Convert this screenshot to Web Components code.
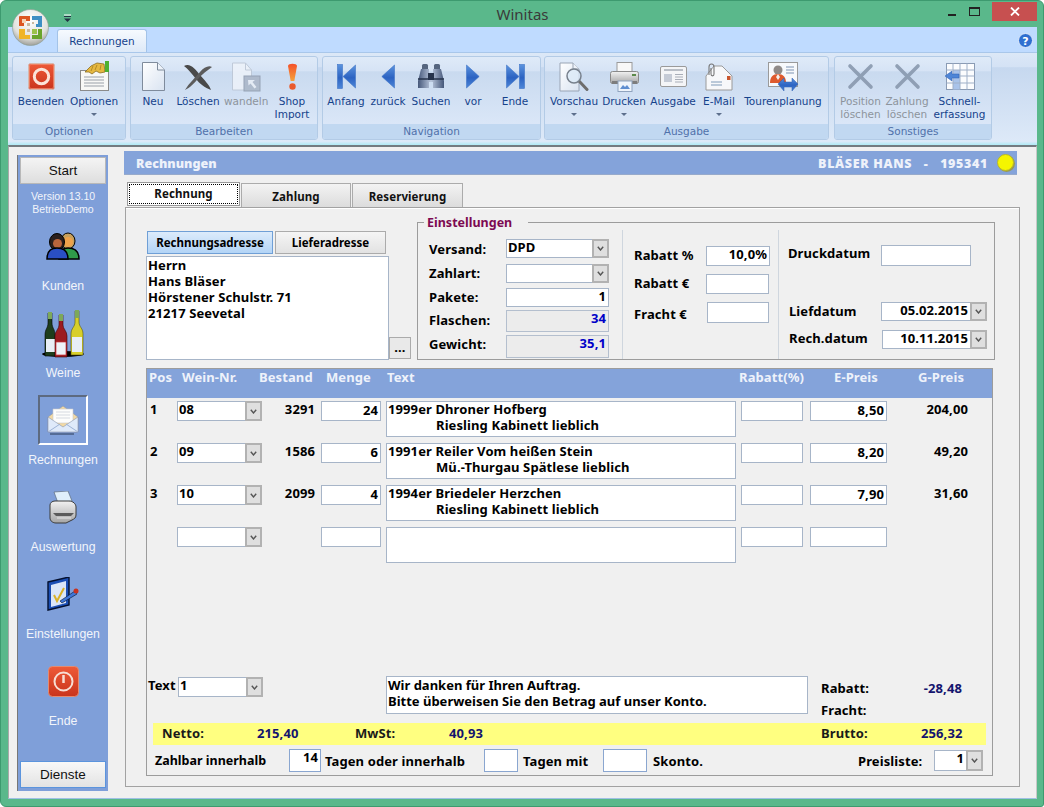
<!DOCTYPE html>
<html lang="de"><head><meta charset="utf-8"><title>Winitas</title>
<style>html,body{margin:0;padding:0;background:#fff}</style></head>
<body>
<svg width="0" height="0" style="position:absolute"><defs>
<linearGradient id="page" x1="0" y1="0" x2="1" y2="1"><stop offset="0" stop-color="#fff"/><stop offset="1" stop-color="#d9e3f1"/></linearGradient>
<linearGradient id="navb" x1="0" y1="0" x2="0" y2="1"><stop offset="0" stop-color="#5b93de"/><stop offset=".55" stop-color="#2c63c2"/><stop offset="1" stop-color="#4d86d8"/></linearGradient>
<linearGradient id="red" x1="0" y1="0" x2="0" y2="1"><stop offset="0" stop-color="#ee5a38"/><stop offset="1" stop-color="#c9341c"/></linearGradient>
<linearGradient id="excl" x1="0" y1="0" x2="0" y2="1"><stop offset="0" stop-color="#f4512a"/><stop offset="1" stop-color="#f5a23a"/></linearGradient>
<linearGradient id="bino" x1="0" y1="0" x2="1" y2="0"><stop offset="0" stop-color="#46587a"/><stop offset=".5" stop-color="#b9c6dc"/><stop offset="1" stop-color="#46587a"/></linearGradient>
<linearGradient id="prn" x1="0" y1="0" x2="0" y2="1"><stop offset="0" stop-color="#f2f2f2"/><stop offset="1" stop-color="#a5a5a5"/></linearGradient>
</defs></svg>

<x-window>
  <x-titlebar slot="title">Winitas</x-titlebar>
  <x-ribbon slot="ribbon">
    <x-rgroup label="Optionen" style="width:114px;margin-left:4px">
      <x-rbtn w="50"><svg slot="icon" width="27" height="27" viewBox="0 0 27 27"><rect x=".5" y=".5" width="26" height="26" rx="2" fill="url(#red)" stroke="#d7b8ae"/><rect x="1.500" y="1.500" width="24" height="24" rx="1.500" fill="none" stroke="#f08a6e" stroke-width=".8"/><circle cx="13.500" cy="13.500" r="7.200" fill="none" stroke="#fbe3d8" stroke-width="3"/></svg>Beenden</x-rbtn>
      <x-rbtn w="56" arrow><svg slot="icon" width="31" height="31" viewBox="0 0 31 31"><rect x="1.500" y="9.500" width="28" height="20" fill="#f8f8f6" stroke="#8b8b8b"/><path d="M5 16h20M5 19h20M5 22h20M5 25h20" stroke="#9aa0a8"/><path d="M6 11 12 5l6-3 7 1 1 8-5 1-4-2-4 3-3-2z" fill="#e6b83f" stroke="#8c6c1e" stroke-width=".8"/><path d="M14 5l-2 5M18 4l-2 5M22 4l-1 5" stroke="#a57e20" stroke-width=".8"/><rect x="26" y="0" width="4" height="11" fill="#4cb030"/></svg>Optionen</x-rbtn>
    </x-rgroup>
    <x-rgroup label="Bearbeiten" style="width:188px;margin-left:4px">
      <x-rbtn w="38"><svg slot="icon" width="23" height="29" viewBox="0 0 23 29"><path d="M.5.5h15l7 7.500v20.500H.5z" fill="url(#page)" stroke="#7f8b9c"/><path d="M15.500.5v7.500h7" fill="#eef3fa" stroke="#7f8b9c"/></svg>Neu</x-rbtn>
      <x-rbtn w="52"><svg slot="icon" width="30" height="28" viewBox="0 0 30 28"><path d="M1 3C7-1 13 7 17 12c4 5 9 9 11 15-6-2-12-7-15-11C9 11 5 6 1 3z" fill="#4a4a4a"/><path d="M29 4c-3-2-8 0-12 5C12 15 6 20 2 27c5-2 9-7 13-11 4-5 10-9 14-12z" fill="#5c5c5c"/></svg>Löschen</x-rbtn>
      <x-rbtn w="44" off><svg slot="icon" width="30" height="30" viewBox="0 0 30 30"><path d="M1.500 1h13l6 7v20h-19z" fill="#eef3fa" stroke="#bcc6d4"/><path d="M14.500 1v7h6" fill="none" stroke="#bcc6d4"/><rect x="13" y="14" width="16" height="15" fill="#a9b5c6" stroke="#8d99ab"/><path d="M17 18h7l-2.500 2 4 5-2 1.500-4-5-2 2z" fill="#e9eef5"/></svg>wandeln</x-rbtn>
      <x-rbtn w="48"><svg slot="icon" width="11" height="28" viewBox="0 0 11 28"><path d="M1 3c0-3 9-3 9 0L7.300 18H3.700z" fill="url(#excl)"/><circle cx="5.500" cy="23.500" r="3.200" fill="#ea5a2c"/></svg>Shop<br>Import</x-rbtn>
    </x-rgroup>
    <x-rgroup label="Navigation" style="width:219px;margin-left:4px">
      <x-rbtn w="40"><svg slot="icon" width="19" height="25" viewBox="0 0 19 25"><rect x=".5" y=".5" width="5" height="24" fill="url(#navb)" stroke="#3f74c6" stroke-width=".6"/><path d="M18.500 1v23L6 12.500z" fill="url(#navb)" stroke="#3f74c6" stroke-width=".6"/></svg>Anfang</x-rbtn>
      <x-rbtn w="44"><svg slot="icon" width="14" height="25" viewBox="0 0 14 25"><path d="M13.500 1v23L.8 12.500z" fill="url(#navb)" stroke="#3f74c6" stroke-width=".6"/></svg>zurück</x-rbtn>
      <x-rbtn w="42"><svg slot="icon" width="28" height="25" viewBox="0 0 28 25"><rect x="5" y="0" width="6" height="6" rx="1.500" fill="#55657f"/><rect x="17" y="0" width="6" height="6" rx="1.500" fill="#55657f"/><path d="M4 5h8v5h4V5h8l3 12v7H16v-6h-4v6H1v-7z" fill="url(#bino)"/><path d="M1 15h11M16 15h11" stroke="#27344c" stroke-width="1.500"/><rect x="11" y="9" width="6" height="7" fill="#27344c"/></svg>Suchen</x-rbtn>
      <x-rbtn w="42"><svg slot="icon" width="14" height="25" viewBox="0 0 14 25"><path d="M.5 1v23L13.200 12.500z" fill="url(#navb)" stroke="#3f74c6" stroke-width=".6"/></svg>vor</x-rbtn>
      <x-rbtn w="42"><svg slot="icon" width="19" height="25" viewBox="0 0 19 25"><rect x="13.500" y=".5" width="5" height="24" fill="url(#navb)" stroke="#3f74c6" stroke-width=".6"/><path d="M.5 1v23L13 12.500z" fill="url(#navb)" stroke="#3f74c6" stroke-width=".6"/></svg>Ende</x-rbtn>
    </x-rgroup>
    <x-rgroup label="Ausgabe" style="width:285px;margin-left:3px">
      <x-rbtn w="52" arrow><svg slot="icon" width="30" height="30" viewBox="0 0 30 30"><path d="M1 1h13l6 6v22H1z" fill="url(#page)" stroke="#9aa5b5"/><path d="M14 1v6h6" fill="#eef3fa" stroke="#9aa5b5"/><path d="M20 19l8 8.500" stroke="#6d6d6d" stroke-width="3" stroke-linecap="round"/><circle cx="15" cy="14" r="7" fill="#dbe9f7" fill-opacity=".75" stroke="#77808c" stroke-width="1.500"/></svg>Vorschau</x-rbtn>
      <x-rbtn w="48" arrow><svg slot="icon" width="29" height="30" viewBox="0 0 29 30"><rect x="7" y="0.500" width="15" height="10" fill="#f8f8f8" stroke="#9a9a9a"/><rect x=".5" y="9.500" width="28" height="12" rx="2" fill="url(#prn)" stroke="#8a8a8a"/><rect x="22" y="12" width="4" height="2" fill="#5b8a4a"/><rect x="2" y="19" width="25" height="3" fill="#7d7d7d"/><rect x="8" y="19" width="14" height="10.500" fill="#eef4fb" stroke="#8fa3be"/><path d="M10 27l3-4 2 2 2-2 3 4z" fill="#5e8ed0"/></svg>Drucken</x-rbtn>
      <x-rbtn w="50"><svg slot="icon" width="27" height="21" viewBox="0 0 27 21"><rect x=".5" y=".5" width="26" height="20" rx="1.500" fill="#f4f5f7" stroke="#9a9a9a"/><path d="M4 4h19" stroke="#b9bec6" stroke-width="2"/><rect x="4" y="8" width="8" height="8" fill="#c5cbd6"/><path d="M15 8.500h8M15 11h8M15 13.500h8M15 16h8" stroke="#a9aeb8"/></svg>Ausgabe</x-rbtn>
      <x-rbtn w="42" arrow><svg slot="icon" width="28" height="28" viewBox="0 0 28 28"><path d="M1 13 9 3h8l10 10v14H1z" fill="#f7f8fa" stroke="#9a9a9a"/><rect x="22" y="13" width="3.500" height="4" fill="#c9562e"/><path d="M6 19h11M6 22h11" stroke="#7f9ab8"/><path d="M4 12V4c0-4 5-4 5 0v7c0 2.500-3 2.500-3 0V5" fill="none" stroke="#777" stroke-width="1.100"/></svg>E-Mail</x-rbtn>
      <x-rbtn w="86"><svg slot="icon" width="31" height="30" viewBox="0 0 31 30"><rect x=".5" y=".5" width="29" height="24" fill="#f7f9fc" stroke="#9a9a9a"/><path d="M18 5h8M18 8h8M18 11h8" stroke="#7d93b3"/><circle cx="10" cy="8" r="4.500" fill="#8f8a88"/><path d="M2 21c0-6 3-9 8-9s8 3 8 9z" fill="#de5a2e"/><path d="M10 12l2 3-2 3-2-3z" fill="#f4f0ec"/><path d="M10 22l6-6v4h8v-4l6 6-6 7v-4h-8v4z" fill="url(#navb)" stroke="#2f5eb0" stroke-width=".5"/></svg>Tourenplanung</x-rbtn>
    </x-rgroup>
    <x-rgroup label="Sonstiges" style="width:158px;margin-left:5px">
      <x-rbtn w="45" off><svg slot="icon" width="27" height="27" viewBox="0 0 27 27"><path d="M3 3 24 24M24 3 3 24" stroke="#8494aa" stroke-width="3.600" stroke-linecap="round"/></svg>Position<br>löschen</x-rbtn>
      <x-rbtn w="48" off><svg slot="icon" width="27" height="27" viewBox="0 0 27 27"><path d="M3 3 24 24M24 3 3 24" stroke="#8494aa" stroke-width="3.600" stroke-linecap="round"/></svg>Zahlung<br>löschen</x-rbtn>
      <x-rbtn w="57"><svg slot="icon" width="30" height="27" viewBox="0 0 30 27"><rect x="1.500" y=".5" width="28" height="26" fill="#fbfcfe" stroke="#8a9bb4"/><rect x="8" y="7" width="7" height="19.500" fill="#a9c3ea"/><path d="M8 .5v26M15 .5v26M22 .5v26M1.500 7h28M1.500 13h28M1.500 20h28" stroke="#9fb0c8"/><path d="M0 13l7-5v3h7v4H7v3z" fill="#4e85d6" stroke="#2f5eb0" stroke-width=".5"/></svg>Schnell-<br>erfassung</x-rbtn>
    </x-rgroup>
  </x-ribbon>

  <x-sidebar slot="side">
    <x-sideitem label="Kunden"><svg width="34" height="28" viewBox="0 0 34 28"><ellipse cx="22" cy="9" rx="7" ry="8" fill="#c7a05c" stroke="#000"/><circle cx="22" cy="10" r="5" fill="#eea24b"/><path d="M13 27c0-8 3-11 9-11s11 3 11 11z" fill="#2f9a4a" stroke="#000" stroke-width="1.500"/><ellipse cx="11" cy="10" rx="7.500" ry="8.500" fill="#2a1f1d" stroke="#000"/><circle cx="11.500" cy="11.500" r="4.500" fill="#b9653c"/><path d="M1 27c0-8 4-11 10-11s11 3 11 11z" fill="#2a4fc4" stroke="#000" stroke-width="1.500"/></svg></x-sideitem>
    <x-sideitem label="Weine"><svg width="44" height="49" viewBox="0 0 44 49"><ellipse cx="22" cy="45" rx="21" ry="3" fill="#000"/><path d="M4 47V26c0-6 3-7 3-12V4h4v10c0 5 3 6 3 12v21z" fill="#1e3d1c" stroke="#000" stroke-width=".6"/><rect x="7" y="3" width="4" height="7" fill="#7da85a"/><rect x="5" y="30" width="9" height="13" fill="#e8eef5"/><path d="M30 46V25c0-6 4-7 4-12V2h4v11c0 5 4 6 4 12v21z" fill="#d8cf2a" stroke="#59560a" stroke-width=".6"/><rect x="34" y="1" width="4" height="8" fill="#7da85a"/><rect x="31" y="28" width="10" height="15" fill="#e8eef5"/><path d="M14 48V27c0-5 4-7 4-11V6h4v10c0 4 4 6 4 11v21z" fill="#9c1b20" stroke="#3d0507" stroke-width=".6"/><rect x="18" y="5" width="4" height="7" fill="#7da85a"/><rect x="15" y="33" width="10" height="13" fill="#eef2f7" stroke="#c5353a" stroke-width=".7"/></svg></x-sideitem>
    <x-sideitem label="Rechnungen" active><svg width="32" height="32" viewBox="0 0 32 32"><path d="M1 13 16 2l15 11v15H1z" fill="#f2d9a4" stroke="#8a96ac" stroke-width=".6"/><path d="M6 5h20v14H6z" fill="#fdfdfc" stroke="#c9c9c9" stroke-width=".6"/><path d="M9 8h14M9 11h14M9 14h14" stroke="#d5d9e0"/><path d="M1 13l15 10 15-10v15H1z" fill="#dfeafa" stroke="#8a96ac" stroke-width=".6"/><path d="M1 28 13 20M31 28 19 20" stroke="#9db3d6"/><path d="M3 30h24" stroke="#2d3a55"/></svg></x-sideitem>
    <x-sideitem label="Auswertung"><svg width="28" height="33" viewBox="0 0 28 33"><path d="M5 1l14-1 4 10-14 2z" fill="#dfeffb" stroke="#5d6b7c" stroke-width=".7"/><path d="M1 14c0-2 2-4 5-4h14c4 0 7 3 7 6v8c0 3-2 4-4 5l-6 3H7c-3 0-6-2-6-5z" fill="url(#prn)" stroke="#3b3b3b"/><path d="M4 22h21l-3 3H7z" fill="#5a5a5a"/><path d="M8 27h14" stroke="#e6e6e6"/></svg></x-sideitem>
    <x-sideitem label="Einstellungen"><svg width="32" height="34" viewBox="0 0 32 34"><path d="M1 5 22 0v28L1 33z" fill="#1b4fb5" stroke="#04102e" stroke-width="1.400"/><path d="M4 8 19 4v22L4 30z" fill="#dbe6f8"/><path d="M7 18l3 6 7-13" fill="none" stroke="#d9b22a" stroke-width="2"/><path d="M13 24 28 14l2 3-15 9z" fill="#3f76d8" stroke="#04102e" stroke-width=".6"/><circle cx="29" cy="14" r="2.500" fill="#c8321f"/></svg></x-sideitem>
    <x-sideitem label="Ende"><svg width="31" height="31" viewBox="0 0 31 31"><rect x=".5" y=".5" width="30" height="30" rx="4" fill="url(#red)" stroke="#e48b70"/><circle cx="15.500" cy="15.500" r="9" fill="none" stroke="#f7ded4" stroke-width="2"/><path d="M15.500 9v8" stroke="#f7ded4" stroke-width="2.500"/></svg></x-sideitem>
  </x-sidebar>

  <x-invoice slot="form"></x-invoice>
</x-window>

<script>
function def(name, css, html){
  customElements.define(name, class extends HTMLElement{
    constructor(){super();const r=this.attachShadow({mode:'open'});
      r.innerHTML='<style>'+css+'</style>'+(typeof html==='function'?html(this):html);}
  });
}
const UI='"Noto Sans","DejaVu Sans",sans-serif';
def('x-window',`:host{display:flex;flex-direction:column;box-sizing:border-box;width:1044px;height:807px;background:#5ab88b;border:1px solid #3d9a6f;border-radius:6px 6px 3px 6px;padding:0 6px 7px 7px;overflow:hidden;position:relative;font-family:${UI}}
.main{flex:1;min-height:0;display:flex;align-items:flex-start;background:#f0f0f0;border-top:2px solid #737b80;border-left:1px solid #a9a9a9;border-bottom:1px solid #9fc0e4;border-right:1px solid #c8c8c8;padding:4px 0 0 8px}`,
`<slot name="title"></slot><slot name="ribbon"></slot><div class="main"><slot name="side"></slot><slot name="form"></slot></div>`);

def('x-titlebar',`:host{display:block;height:26px;flex:none;text-align:center;font:15px/27px "Noto Sans",sans-serif;color:#3a3a3a}
.orb{position:absolute;left:11px;top:8px;width:37px;height:37px;z-index:3}
.qa{position:absolute;left:62px;top:13px}
.btns{position:absolute;right:0;top:1px;display:flex;align-items:flex-start}
.b{width:22px;height:19px;display:flex;align-items:center;justify-content:center}
.x{width:45px;background:#c75050;margin-left:7px;margin-right:6px}`,
`<svg class="orb" viewBox="0 0 37 37"><defs><radialGradient id="orb" cx=".5" cy=".3" r=".75"><stop offset="0" stop-color="#ffffff"/><stop offset=".65" stop-color="#e2e2de"/><stop offset="1" stop-color="#8f8f88"/></radialGradient></defs><circle cx="18.500" cy="18.500" r="18" fill="url(#orb)" stroke="#8a9a90" stroke-width=".6"/><path d="M7 8a1 1 0 0 1 1-1h10v5h-6v5H7z" fill="#dc5522"/><rect x="10" y="10" width="4" height="4" fill="#f6d2b4"/><path d="M20 7h10v11h-6v-3h2v-4h-6z" fill="#3f8fc4"/><path d="M7 20h6v6h5v4H8a1 1 0 0 1-1-1z" fill="#f0b428"/><path d="M20 26h6v-6h4v10H20z" fill="#6aa52c"/><rect x="20" y="20" width="5" height="5" fill="#9bc24a"/><path d="M15 14h3v3h-3zM20 13h2v2h-2zM15 20h3v3h-3z" fill="#c9b9a0"/></svg>
<svg class="qa" width="9" height="9" viewBox="0 0 9 9"><path d="M1 1h7" stroke="#fff"/><path d="M1 2.500h7" stroke="#234"/><path d="M1 4.500h7L4.500 8z" fill="#234"/></svg>
<slot></slot>
<div class="btns"><div class="b"><svg width="8" height="8" viewBox="0 0 8 8"><rect y="6" width="8" height="2" fill="#222"/></svg></div><div class="b"><svg width="11" height="9" viewBox="0 0 11 9"><rect x=".5" y=".5" width="10" height="8" fill="none" stroke="#222"/><rect width="11" height="2" fill="#222"/></svg></div><div class="b x"><svg width="10" height="9" viewBox="0 0 10 9"><path d="M1 .5 9 8.500M9 .5 1 8.500" stroke="#fff" stroke-width="1.800"/></svg></div></div>`);

def('x-ribbon',`:host{display:block;flex:none;font:10.500px/13px "DejaVu Sans",sans-serif;position:relative}
.tabs{height:25px;background:#bfdbff;display:flex;align-items:flex-end;padding-left:49px;box-sizing:border-box;justify-content:space-between;padding-right:4px}
.tab{width:88px;height:22px;border:1px solid #a3c3e8;border-bottom:0;border-radius:3px 3px 0 0;background:linear-gradient(#f6fafe,#dde9f8);color:#15428b;text-align:center;line-height:23px;box-sizing:content-box;font-size:10.500px}
.help{align-self:center;margin-top:1px}
.body{height:93px;box-sizing:border-box;display:flex;align-items:flex-start;padding-top:3px;border-top:1px solid #a9c7ea;background:linear-gradient(#dce8f7 0,#d4e2f5 15%,#c6d8ef 16%,#dde9f8 96%,#aeeaf5 100%)}`,
`<div class="tabs"><div class="tab">Rechnungen</div><svg class="help" width="15" height="15" viewBox="0 0 15 15"><circle cx="7.500" cy="7.500" r="7" fill="#2f6fd0" stroke="#dfe9f8"/><text x="7.500" y="11.500" text-anchor="middle" font-family="DejaVu Sans" font-weight="bold" font-size="11" fill="#fff">?</text></svg></div><div class="body"><slot></slot></div>`);

def('x-rgroup',`:host{display:block;box-sizing:border-box;height:84px;flex:none;border:1px solid #b3cbe6;border-radius:3px;background:linear-gradient(#dfeaf8 0,#d6e3f5 17%,#c9daef 18%,#dfeafa 100%);position:relative;overflow:hidden}
.b{display:flex;height:67px;padding-left:3px}
.l{height:15px;background:#c1d8f1;text-align:center;color:#5071aa;font-size:10.500px;line-height:15px}`,
t=>`<div class="b"><slot></slot></div><div class="l">${t.getAttribute('label')}</div>`);

def('x-rbtn',`:host{display:block;flex:none;text-align:center;color:#15428b;padding-top:1px;box-sizing:border-box;white-space:nowrap}
:host([off]){color:#8d949c}
:host([off]) .i{opacity:.85}
.i{height:37px;display:flex;align-items:center;justify-content:center}
.a{width:0;height:0;margin:5px auto 0;border:3px solid transparent;border-top:3px solid #5d6f8c;border-bottom:0}`,
t=>{t.style.width=t.getAttribute('w')+'px';return `<div class="i"><slot name="icon"></slot></div><div><slot></slot></div>${t.hasAttribute('arrow')?'<div class="a"></div>':''}`});

def('x-sidebar',`:host{display:flex;flex-direction:column;box-sizing:border-box;width:91px;height:636px;margin-top:4px;flex:none;background:#7f9fd9;border-left:1px solid #777;padding:2px 2px 3px 2px;font-family:"Liberation Sans",sans-serif;color:#f2f5fb}
.btn{box-sizing:border-box;height:27px;width:86px;font-size:13.500px;line-height:26px;text-align:center;color:#111;background:linear-gradient(#f4f4f4,#dedede);border:1px solid #b8b8b8}
.d{margin-top:auto;border:1px solid #5b94dd;background:linear-gradient(#f8f8f8,#e3e3e3)}
.v{height:26px;margin-top:6px;font-size:10.500px;line-height:13px;text-align:center;width:86px}`,
`<div class="btn">Start</div><div class="v">Version 13.10<br>BetriebDemo</div><slot></slot><div class="btn d">Dienste</div>`);

def('x-sideitem',`:host{display:block;height:87px;width:86px;text-align:center}
.i{height:60px;display:flex;align-items:center;justify-content:center}
.box{box-sizing:border-box;width:50px;height:50px;display:flex;align-items:center;justify-content:center;border:2px solid;border-color:#5d6a80 #fff #fff #5d6a80}
.l{height:18px;line-height:18px;font-size:12.300px;margin-top:1px}`,
t=>{const a=t.hasAttribute('active');return `<div class="i">${a?'<div class="box"><slot></slot></div>':'<slot></slot>'}</div><div class="l">${t.getAttribute('label')}</div>`});

/* form controls */
const FF=`font:bold 13px/16px "Noto Sans","DejaVu Sans",sans-serif;letter-spacing:.1px;`;
def('x-box',`:host{display:block;box-sizing:border-box;flex:none;border:1px solid #a7b5c8;background:#fff;padding:0 2px 0 1px;${FF}color:#000;overflow:hidden;white-space:pre}
:host([right]){text-align:right}
:host([ro]){background:#ececec;border-color:#b4bfce;color:#0000c8}`,`<slot></slot>`);
def('x-combo',`:host{display:flex;box-sizing:border-box;flex:none;height:20px;${FF}color:#000}
.f{flex:1;min-width:0;box-sizing:border-box;border:1px solid #a7b5c8;border-right:0;background:#fff;padding:0 2px 0 1px;line-height:15px;white-space:pre}
:host([right]) .f{text-align:right}
.a{box-sizing:border-box;width:17px;flex:none;background:#dfdfdf;border:2px solid #b2b2b2;display:flex;align-items:center;justify-content:center}`,
`<div class="f"><slot></slot></div><div class="a"><svg width="7" height="5" viewBox="0 0 7 5"><path d="M.8.8 3.500 4 6.200.8" fill="none" stroke="#555" stroke-width="1.400"/></svg></div>`);
def('x-tab',`:host{display:block;box-sizing:border-box;height:24px;flex:none;margin-top:1px;border:1px solid #ababab;border-bottom:0;background:linear-gradient(#f3f3f3,#dcdcdc);text-align:center;font:bold 11.500px/25px "Noto Sans",sans-serif;color:#111}
:host([active]){margin-top:0;border:1px solid #999;background:#fff;line-height:17px;padding:1px}
.o{display:block;height:100%;box-sizing:border-box}
:host([active]) .o{border:1px dotted #000}`,`<span class="o"><slot></slot></span>`);

def('x-wine-row',`:host{display:grid;height:42px;box-sizing:border-box;grid-template-columns:30px 85px 53px 66px 355px 67px 84px 81px;align-items:start;${FF}color:#000}
.p{padding:0 0 0 3px}
.s{text-align:right}
.n{text-align:right}
x-box{height:20px;line-height:16px}
.q{margin-left:6px}.t{margin-left:5px;height:36px;line-height:16px}
.t div:first-child{margin-top:-1px}
.r{margin-left:5px}.e{margin-left:7px}.t div+div{padding-left:48px}`,
t=>{const g=n=>t.getAttribute(n)||'';return `<div class="p">${g('pos')}</div><x-combo>${g('nr')}</x-combo><div class="s">${g('stock')}</div><x-box class="q" right>${g('qty')}</x-box><x-box class="t"><div>${g('l1')}</div><div>${g('l2')}</div></x-box><x-box class="r"></x-box><x-box class="e" right>${g('price')}</x-box><div class="n">${g('total')}</div>`});

def('x-field-row',`:host{display:flex;align-items:center;flex:none;${FF}color:#000}
.l{flex:none}`,
t=>`<div class="l" style="width:${t.getAttribute('lw')}px;padding-left:${t.getAttribute('li')||0}px;padding-top:${t.getAttribute('lt')||0}px;padding-bottom:${t.getAttribute('lb')||0}px;box-sizing:border-box">${t.getAttribute('label')}</div><slot></slot>`);

def('x-invoice',`:host{display:block;width:896px;flex:none;margin-left:16px;${FF}color:#000}
.head{box-sizing:border-box;height:24px;width:893px;background:#84a3da;display:flex;align-items:center;color:#eef2fa;padding:2px 3px 0 12px;font-size:12.500px;letter-spacing:0;border-bottom:1px solid #97aacb}
.head>b{flex:1}.head i{font-style:normal;letter-spacing:.65px;margin-right:9px}
.dot{width:17px;height:17px;margin-top:-2px;border-radius:50%;background:#f5f500;border:1px solid #b7b72c;box-shadow:1px 1px 0 #9a9a50;box-sizing:border-box}
.tabs{display:flex;height:25px;margin-top:7px;padding-left:3px;gap:1px}
.panel{box-sizing:border-box;width:895px;margin-left:1px;height:580px;border:1px solid #a2a2a2;box-shadow:inset 0 1px 0 #fff;padding:7px 0 0 20px}
.rowa{display:flex;align-items:flex-start}
.addr{width:265px;flex:none;margin-top:16px}
.ab{display:flex;gap:2px;padding-left:1px;margin-bottom:2px}
.bt{box-sizing:border-box;height:23px;text-align:center;line-height:22px;border:1px solid #ababab;background:linear-gradient(#f5f5f5,#e2e2e2);font-size:11.500px;letter-spacing:0}
.bt.on{border-color:#6f9fd6;background:linear-gradient(#dcebfb,#b3d4f6)}
.ac{display:flex;align-items:flex-end}
.dots{box-sizing:border-box;width:22px;height:22px;margin-bottom:1px;border:1px solid #ababab;background:#e9e9e9;text-align:center;line-height:18px}
fieldset{box-sizing:border-box;margin:0 0 0 6px;width:578px;height:145px;padding:0;border:1px solid #9c9c9c;min-width:0;display:flex}
legend{margin-left:6px;padding:0 16px 0 3px;color:#7d0a52;line-height:15px;height:15px;font-size:12.500px;letter-spacing:0}
.cols{display:flex;height:129px}
.c{box-sizing:border-box;flex:none;height:129px}
.c1{width:205px;border-right:1px solid #cfd6de;padding-top:9px}
.c2{width:156px;border-right:1px solid #cfd6de;padding-top:16px}
.c3{width:215px;padding-top:15px}
.list{box-sizing:border-box;width:847px;height:408px;margin-top:8px;border:1px solid #9c9c9c}
.lh{height:29px;background:#84a3da;color:#eef2fa;display:flex;padding-left:2px;line-height:16px}
.lh span{flex:none}
.rows{margin-top:3px}
.rowc{display:flex;margin-top:107px;height:47px}
.tl{width:31px;padding-left:1px;box-sizing:border-box;margin-top:1px}
.tot{margin-left:13px;width:141px;padding-top:4px}
.tot div{display:flex;justify-content:space-between;height:22px;line-height:17px}
.navy{color:#14146e}
.yel{display:flex;box-sizing:border-box;margin-left:6px;width:833px;height:22px;background:#ffff80;padding-left:9px;line-height:21px;color:#14146e}
.yel span{flex:none}.yel .k{color:#1a1a1a}
.bot{display:flex;align-items:center;margin-top:4px;height:23px;padding-left:8px}
.bot span{flex:none}
x-box{line-height:15px}`,
`<div class="head"><b>Rechnungen</b><i><b>BLÄSER HANS &nbsp;&nbsp;-&nbsp;&nbsp; 195341</b></i><div class="dot"></div></div>
<div class="tabs"><x-tab active style="width:113px">Rechnung</x-tab><x-tab style="width:110px">Zahlung</x-tab><x-tab style="width:111px">Reservierung</x-tab></div>
<div class="panel">
 <div class="rowa">
  <div class="addr">
   <div class="ab"><div class="bt on" style="width:126px">Rechnungsadresse</div><div class="bt" style="width:111px">Lieferadresse</div></div>
   <div class="ac"><x-box style="width:243px;height:104px;line-height:16px"><div>Herrn</div><div>Hans Bläser</div><div>Hörstener Schulstr. 71</div><div>21217 Seevetal</div></x-box><div class="dots">...</div></div>
  </div>
  <fieldset><legend>Einstellungen</legend><div class="cols">
   <div class="c c1">
    <x-field-row label="Versand:" lw="88" li="11"><x-combo style="width:103px;height:19px">DPD</x-combo></x-field-row>
    <x-field-row label="Zahlart:" lw="88" li="11" lb="2" style="margin-top:6px"><x-combo style="width:103px;height:19px"></x-combo></x-field-row>
    <x-field-row label="Pakete:" lw="88" li="11" lb="2" style="margin-top:5px"><x-box right style="width:103px;height:19px">1</x-box></x-field-row>
    <x-field-row label="Flaschen:" lw="88" li="11" lb="2" style="margin-top:3px"><x-box right ro style="width:103px;height:22px">34</x-box></x-field-row>
    <x-field-row label="Gewicht:" lw="88" li="11" lb="5" style="margin-top:3px"><x-box right ro style="width:103px;height:23px">35,1</x-box></x-field-row>
   </div>
   <div class="c c2">
    <x-field-row label="Rabatt %" lw="83" li="11" lb="2" style="height:20px"><x-box right style="width:64px;height:20px">10,0%</x-box></x-field-row>
    <x-field-row label="Rabatt €" lw="83" li="11" lb="2" style="margin-top:8px;height:20px"><x-box style="width:63px;height:20px"></x-box></x-field-row>
    <x-field-row label="Fracht €" lw="84" li="11" lt="3" style="margin-top:8px;height:21px"><x-box style="width:62px;height:21px"></x-box></x-field-row>
   </div>
   <div class="c c3">
    <x-field-row label="Druckdatum" lw="102" li="9" lb="6" style="height:21px"><x-box style="width:90px;height:21px"></x-box></x-field-row>
    <x-field-row label="Liefdatum" lw="102" li="10" lb="1" style="margin-top:36px"><x-combo right style="width:106px;height:19px">05.02.2015</x-combo></x-field-row>
    <x-field-row label="Rech.datum" lw="103" li="10" lb="3" style="margin-top:9px"><x-combo right style="width:105px;height:19px">10.11.2015</x-combo></x-field-row>
   </div>
  </div></fieldset>
 </div>
 <div class="list">
  <div class="lh"><span style="width:33px">Pos</span><span style="width:77px">Wein-Nr.</span><span style="width:67px">Bestand</span><span style="width:61px">Menge</span><span style="width:352px">Text</span><span style="width:95px">Rabatt(%)</span><span style="width:84px">E-Preis</span><span>G-Preis</span></div>
  <div class="rows">
   <x-wine-row pos="1" nr="08" stock="3291" qty="24" l1="1999er Dhroner Hofberg" l2="Riesling Kabinett lieblich" price="8,50" total="204,00"></x-wine-row>
   <x-wine-row pos="2" nr="09" stock="1586" qty="6" l1="1991er Reiler Vom heißen Stein" l2="Mü.-Thurgau Spätlese lieblich" price="8,20" total="49,20"></x-wine-row>
   <x-wine-row pos="3" nr="10" stock="2099" qty="4" l1="1994er Briedeler Herzchen" l2="Riesling Kabinett lieblich" price="7,90" total="31,60"></x-wine-row>
   <x-wine-row></x-wine-row>
  </div>
  <div class="rowc">
   <div class="tl">Text</div><x-combo style="width:85px;margin-top:1px">1</x-combo>
   <x-box style="margin-left:123px;width:422px;height:38px;line-height:16px;letter-spacing:0"><div>Wir danken für Ihren Auftrag.</div><div>Bitte überweisen Sie den Betrag auf unser Konto.</div></x-box>
   <div class="tot"><div>Rabatt:<span class="navy">-28,48</span></div><div>Fracht:</div></div>
  </div>
  <div class="yel"><span class="k" style="width:95px">Netto:</span><span style="width:98px">215,40</span><span class="k" style="width:94px">MwSt:</span><span style="width:372px">40,93</span><span class="k" style="width:100px">Brutto:</span><span>256,32</span></div>
  <div class="bot"><span style="width:134px;letter-spacing:0;font-size:12.500px">Zahlbar innerhalb</span><x-box right style="width:32px;height:23px;border-color:#8aa6d0">14</x-box><span style="margin-left:4px;width:159px">Tagen oder innerhalb</span><x-box style="width:34px;height:23px;border-color:#8aa6d0"></x-box><span style="margin-left:5px;width:80px">Tagen mit</span><x-box style="width:44px;height:23px;border-color:#8aa6d0"></x-box><span style="margin-left:6px;width:205px">Skonto.</span><span style="width:76px">Preisliste:</span><x-combo right style="width:49px;height:21px">1</x-combo></div>
 </div>
</div>`);
</script>
</body></html>
